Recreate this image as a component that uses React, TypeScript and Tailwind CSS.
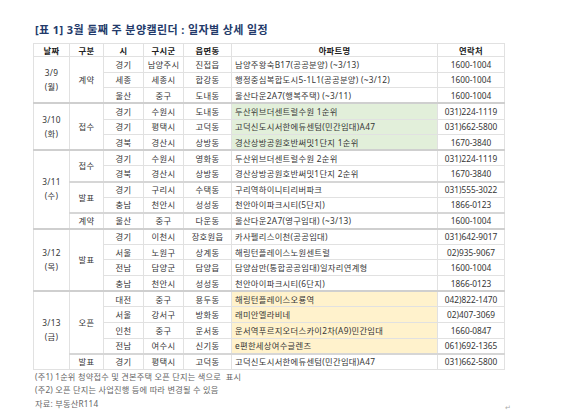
import React from "react";

type Row = {
  date?: { d: string; w: string; span: number };
  cat?: { t: string; span: number };
  si: string;
  gu: string;
  dong: string;
  apt: string;
  tel: string;
  bg?: "g" | "y";
  group?: boolean;
  sub?: boolean;
};

const rows: Row[] = [
  { date: { d: "3/9", w: "(월)", span: 3 }, cat: { t: "계약", span: 3 }, si: "경기", gu: "남양주시", dong: "진접읍", apt: "남양주왕숙B17(공공분양) (~3/13)", tel: "1600-1004" },
  { si: "세종", gu: "세종시", dong: "합강동", apt: "행정중심복합도시5-1L1(공공분양) (~3/12)", tel: "1600-1004" },
  { si: "울산", gu: "중구", dong: "도내동", apt: "울산다운2A7(행복주택) (~3/11)", tel: "1600-1004" },
  { date: { d: "3/10", w: "(화)", span: 3 }, cat: { t: "접수", span: 3 }, si: "경기", gu: "수원시", dong: "도내동", apt: "두산위브더센트럴수원 1순위", tel: "031)224-1119", bg: "g", group: true },
  { si: "경기", gu: "평택시", dong: "고덕동", apt: "고덕신도시서한에듀센텀(민간임대)A47", tel: "031)662-5800", bg: "g" },
  { si: "경북", gu: "경산시", dong: "상방동", apt: "경산상방공원호반써밋1단지 1순위", tel: "1670-3840", bg: "g" },
  { date: { d: "3/11", w: "(수)", span: 5 }, cat: { t: "접수", span: 2 }, si: "경기", gu: "수원시", dong: "영화동", apt: "두산위브더센트럴수원 2순위", tel: "031)224-1119", group: true },
  { si: "경북", gu: "경산시", dong: "상방동", apt: "경산상방공원호반써밋1단지 2순위", tel: "1670-3840" },
  { cat: { t: "발표", span: 2 }, si: "경기", gu: "구리시", dong: "수택동", apt: "구리역하이니티리버파크", tel: "031)555-3022", sub: true },
  { si: "충남", gu: "천안시", dong: "성성동", apt: "천안아이파크시티(5단지)", tel: "1866-0123" },
  { cat: { t: "계약", span: 1 }, si: "울산", gu: "중구", dong: "다운동", apt: "울산다운2A7(영구임대) (~3/13)", tel: "1600-1004", sub: true },
  { date: { d: "3/12", w: "(목)", span: 4 }, cat: { t: "발표", span: 4 }, si: "경기", gu: "이천시", dong: "장호원읍", apt: "카사펠리스이천(공공임대)", tel: "031)642-9017", group: true },
  { si: "서울", gu: "노원구", dong: "상계동", apt: "해링턴플레이스노원센트럴", tel: "02)935-9067" },
  { si: "전남", gu: "담양군", dong: "담양읍", apt: "담양삼만(통합공공임대)일자리연계형", tel: "1600-1004" },
  { si: "충남", gu: "천안시", dong: "성성동", apt: "천안아이파크시티(6단지)", tel: "1866-0123" },
  { date: { d: "3/13", w: "(금)", span: 5 }, cat: { t: "오픈", span: 4 }, si: "대전", gu: "중구", dong: "용두동", apt: "해링턴플레이스오룡역", tel: "042)822-1470", bg: "y", group: true },
  { si: "서울", gu: "강서구", dong: "방화동", apt: "래미안엘라비네", tel: "02)407-3069", bg: "y" },
  { si: "인천", gu: "중구", dong: "운서동", apt: "운서역푸르지오더스카이2차(A9)민간임대", tel: "1660-0847", bg: "y" },
  { si: "전남", gu: "여수시", dong: "신기동", apt: "e편한세상여수글렌즈", tel: "061)692-1365", bg: "y" },
  { cat: { t: "발표", span: 1 }, si: "경기", gu: "평택시", dong: "고덕동", apt: "고덕신도시서한에듀센텀(민간임대)A47", tel: "031)662-5800", sub: true },
];

const cell = "border border-[#e1e1e1] p-0 text-center align-middle";

export default function App() {
  return (
    <div
      className="w-[580px] h-[411px] bg-white pl-[33px] pt-[24px] text-[#363636]"
      style={{ fontFamily: '"Noto Sans", "Noto Sans CJK KR", sans-serif' }}
    >
      <div className="pl-[2px] text-[11px] leading-[12px] font-bold tracking-[0.4px] text-[#233a6a]">
        [표 1] 3월 둘째 주 분양캘린더 : 일자별 상세 일정
      </div>
      <table className="mt-[7px] w-[471px] table-fixed border-collapse text-[8.3px] leading-[11px] tracking-[0.3px]">
        <colgroup>
          <col className="w-[36px]" />
          <col className="w-[34px]" />
          <col className="w-[40px]" />
          <col className="w-[40px]" />
          <col className="w-[48px]" />
          <col className="w-[206px]" />
          <col className="w-[67px]" />
        </colgroup>
        <thead>
          <tr className="h-[13px] font-bold text-[#222]">
            <th className={cell}>날짜</th>
            <th className={cell}>구분</th>
            <th className={cell}>시</th>
            <th className={cell}>구시군</th>
            <th className={cell}>읍면동</th>
            <th className={cell}>아파트명</th>
            <th className={cell}>연락처</th>
          </tr>
        </thead>
        <tbody>
          {rows.map((r, i) => {
            const top = r.group
              ? "border-t-2 border-t-[#cfcfcf]"
              : r.sub
              ? "border-t-2 border-t-[#d6d6d6]"
              : "";
            const bg =
              r.bg === "g" ? "bg-[#e2efda]" : r.bg === "y" ? "bg-[#fff2cc]" : "";
            return (
              <tr key={i} className="h-[15.65px]">
                {r.date && (
                  <td rowSpan={r.date.span} className={`${cell} ${top} leading-[14px]`}>
                    <div>{r.date.d}</div>
                    <div>{r.date.w}</div>
                  </td>
                )}
                {r.cat && (
                  <td rowSpan={r.cat.span} className={`${cell} ${top}`}>
                    {r.cat.t}
                  </td>
                )}
                <td className={`${cell} ${top}`}>{r.si}</td>
                <td className={`${cell} ${top}`}>{r.gu}</td>
                <td className={`${cell} ${top}`}>{r.dong}</td>
                <td className={`${cell} ${top} ${bg} !text-left pl-[3px] whitespace-nowrap`}>
                  {r.apt}
                </td>
                <td className={`${cell} ${top} tracking-normal`}>{r.tel}</td>
              </tr>
            );
          })}
        </tbody>
      </table>
      <div className="w-[478px] pl-[2px] text-[8.2px] leading-[13.5px] tracking-[0.2px] text-[#666]">
        <div>(주1) 1순위 청약접수 및 견본주택 오픈 단지는 색으로&nbsp;&nbsp;표시</div>
        <div>(주2) 오픈 단지는 사업진행 등에 따라 변경될 수 있음</div>
        <div className="flex justify-between">
          <span>자료: 부동산R114</span>
          <span className="mt-[4px] text-[7px] text-[#aaa]">↵</span>
        </div>
      </div>
    </div>
  );
}
